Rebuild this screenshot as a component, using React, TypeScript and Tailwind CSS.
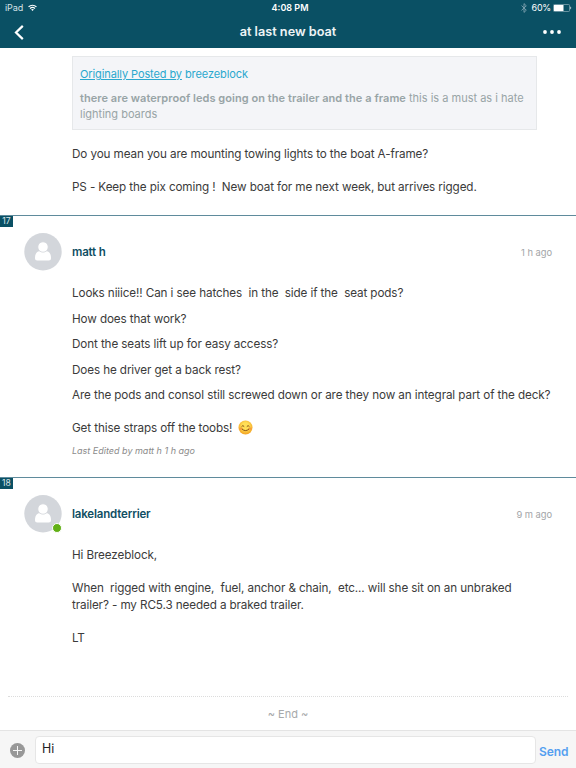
import React, { useState } from 'react';

interface Post {
  number: number;
  author: string;
  time: string;
  online: boolean;
}

const matt: Post = { number: 17, author: 'matt h', time: '1 h ago', online: false };
const lakeland: Post = { number: 18, author: 'lakelandterrier', time: '9 m ago', online: true };

function WifiIcon() {
  return (
    <svg width="9" height="8" viewBox="0 0 10 8" fill="none" stroke="#fff" strokeWidth="1.3">
      <path d="M0.6 2.8C3 0.3 7 0.3 9.4 2.8" />
      <path d="M2.2 4.5C3.8 3 6.2 3 7.8 4.5" />
      <path d="M3.4 5.7C4.3 4.9 5.7 4.9 6.6 5.7L5 7.4Z" fill="#fff" stroke="none" />
    </svg>
  );
}

function BluetoothIcon() {
  return (
    <svg width="6" height="10" viewBox="0 0 6 10" fill="none" stroke="#7fa3b0" strokeWidth="0.9">
      <path d="M0.5 2.6L5.3 7.2L3 9.4V0.6L5.3 2.8L0.5 7.4" />
    </svg>
  );
}

function StatusBar() {
  return (
    <div className="grid h-4 grid-cols-3 items-center pl-[5px] pr-1 text-[9px] leading-4 text-white">
      <div className="flex items-center gap-[5px]">
        <span className="tracking-[-0.1px] text-[#d5e2e7]">iPad</span>
        <WifiIcon />
      </div>
      <div className="pl-[3px] text-center font-semibold">4:08 PM</div>
      <div className="flex items-center justify-end">
        <BluetoothIcon />
        <span className="ml-[5px] mr-[2px] tracking-[-0.2px]">60%</span>
        <svg width="19" height="8" viewBox="0 0 19 8">
          <rect x="0.5" y="0.5" width="16" height="7" rx="0.8" fill="none" stroke="#7fa3b0" strokeWidth="0.8" />
          <rect x="1" y="1" width="9.5" height="6" fill="#fff" />
          <path d="M17.3 2.6V5.4C18.5 5 18.5 3 17.3 2.6Z" fill="#dbe6ea" />
        </svg>
      </div>
    </div>
  );
}

function NavBar() {
  return (
    <div className="flex h-8 items-center justify-between pl-[14px] pr-[15px]">
      <svg width="10" height="15" viewBox="0 0 10 15" fill="none" stroke="#fff" strokeWidth="2.2">
        <path d="M8.8 0.9L2 7.5L8.8 14.1" />
      </svg>
      <h1 className="ml-[9px] text-[12.7px] font-semibold text-[#eef4f6]">at last new boat</h1>
      <svg width="18" height="4" viewBox="0 0 18 4" fill="#fff">
        <circle cx="2" cy="2" r="1.9" />
        <circle cx="9" cy="2" r="1.9" />
        <circle cx="16" cy="2" r="1.9" />
      </svg>
    </div>
  );
}

function Avatar({ online }: { online: boolean }) {
  return (
    <div className="relative h-[38px] w-[38px]">
      <svg width="38" height="38" viewBox="0 0 38 38">
        <circle cx="19" cy="18.7" r="18.7" fill="#d3d6db" />
        <path
          d="M11 25C11 20.5 13 18.2 15.5 18.2H22.5C25 18.2 27 20.5 27 25C27 26.7 26.3 27.5 24.7 27.5H13.3C11.7 27.5 11 26.7 11 25Z"
          fill="#fff"
        />
        <circle cx="19" cy="14" r="5.2" fill="#fff" stroke="#d3d6db" strokeWidth="0.8" />
      </svg>
      {online && (
        <span className="absolute bottom-0 right-0 h-[10px] w-[10px] rounded-full border border-white bg-[#61b015]" />
      )}
    </div>
  );
}

function PostHeader({ post }: { post: Post }) {
  return (
    <div className="border-t border-[#5f8b9c]">
      <div className="h-[17px]">
        <span className="flex h-[11px] w-[13px] items-center justify-center bg-[#0a5064] text-[8.6px] tracking-normal text-[#dce7eb]">
          {post.number}
        </span>
      </div>
      <div className="flex h-[38px] items-center pl-6 pr-6">
        <Avatar online={post.online} />
        <span className="ml-[10px] text-[11.5px] font-semibold tracking-[-0.18px] text-[#0f4e63]">{post.author}</span>
        <span className="ml-auto mt-[3px] text-[9.4px] tracking-[-0.05px] text-[#a3a5a7]">{post.time}</span>
      </div>
    </div>
  );
}

function SmileEmoji() {
  return (
    <svg className="ml-[6px] inline-block align-[-3px]" width="15" height="15" viewBox="0 0 15 15">
      <defs>
        <radialGradient id="face" cx="0.5" cy="0.4" r="0.6">
          <stop offset="0.4" stopColor="#ffdf57" />
          <stop offset="1" stopColor="#f2a01f" />
        </radialGradient>
      </defs>
      <circle cx="7.5" cy="7.5" r="7" fill="url(#face)" />
      <ellipse cx="2.9" cy="8.6" rx="1.6" ry="1.2" fill="#f58a3c" opacity="0.7" />
      <ellipse cx="12.1" cy="8.6" rx="1.6" ry="1.2" fill="#f58a3c" opacity="0.7" />
      <g fill="none" stroke="#77410f" strokeWidth="0.9" strokeLinecap="round">
        <path d="M3.8 6.3Q4.9 4.6 6 6.3" />
        <path d="M9 6.3Q10.1 4.6 11.2 6.3" />
        <path d="M4.2 9.2Q7.5 12.2 10.8 9.2" />
      </g>
    </svg>
  );
}

function App() {
  const [message, setMessage] = useState('Hi');

  return (
    <div className="flex h-[768px] w-[576px] flex-col overflow-hidden bg-white font-[Inter,sans-serif] text-[11.7px] leading-[16.5px] text-[#3b3b3b]">
      <header className="h-12 shrink-0 bg-[#0a5064]">
        <StatusBar />
        <NavBar />
      </header>

      <main className="flex-1 whitespace-pre tracking-[-0.11px]">
        {/* Tail of the previous post */}
        <section className="h-[167px] pl-[72px] pt-2">
          <blockquote className="h-[74px] w-[465px] border border-[#e6e8ea] bg-[#f4f5f8] pl-[7px] pt-[9.4px] text-[11px] tracking-normal text-[#98a4a6]">
            <p className="tracking-[-0.1px] text-[#2aa8ce]">
              <a className="underline">Originally Posted by</a> breezeblock
            </p>
            <p className="mt-[7px]">
              <b className="font-semibold tracking-[0.05px]">there are waterproof leds going on the trailer and the a frame</b> this is a must as i hate
            </p>
            <p>lighting boards</p>
          </blockquote>
          <p className="mt-4">Do you mean you are mounting towing lights to the boat A-frame?</p>
          <p className="mt-[16.5px]">PS - Keep the pix coming !  New boat for me next week, but arrives rigged.</p>
        </section>

        <section className="h-[262px]">
          <PostHeader post={matt} />
          <div className="flex flex-col gap-[9px] pl-[72px] pt-[14px]">
            <p>Looks niiice!! Can i see hatches  in the  side if the  seat pods?</p>
            <p>How does that work?</p>
            <p>Dont the seats lift up for easy access?</p>
            <p>Does he driver get a back rest?</p>
            <p>Are the pods and consol still screwed down or are they now an integral part of the deck?</p>
            <p className="mt-[7px] h-[16.5px]">Get thise straps off the toobs!<SmileEmoji /></p>
            <p className="-mt-[2px] text-[9px] italic tracking-normal text-[#8b8b8b]">Last Edited by matt h 1 h ago</p>
          </div>
        </section>

        <section className="h-[219px]">
          <PostHeader post={lakeland} />
          <div className="flex flex-col gap-[16.5px] pl-[72px] pt-[14px]">
            <p>Hi Breezeblock,</p>
            <p>{'When  rigged with engine,  fuel, anchor & chain,  etc... will she sit on an unbraked\ntrailer? - my RC5.3 needed a braked trailer.'}</p>
            <p>LT</p>
          </div>
        </section>

        <div className="mx-2 border-t border-dotted border-[#dcdcdc] pt-[8.5px] text-center text-[11px] tracking-normal text-[#a7a9ab]">
          ~ End ~
        </div>
      </main>

      <footer className="flex h-[38px] shrink-0 border-t border-[#e4e4e4] bg-[#f6f6f6] pl-[10px] pt-[4.5px]">
        <svg className="mt-[7.5px] shrink-0" width="15" height="15" viewBox="0 0 15 15">
          <circle cx="7.5" cy="7.5" r="7.5" fill="#989898" />
          <path d="M7.5 3V12M3 7.5H12" stroke="#f6f6f6" strokeWidth="1" />
        </svg>
        <input
          className="ml-[10px] h-[28px] w-[501px] rounded-[4px] border border-[#e6e6e6] bg-white pb-[3px] pl-[6px] text-[12.4px] text-[#222] outline-none"
          value={message}
          onChange={(e) => setMessage(e.target.value)}
        />
        <button className="ml-[3px] mt-[8px] h-[17px] text-[12px] font-semibold tracking-[-0.1px] text-[#549ff0]">Send</button>
      </footer>
    </div>
  );
}

export default App;
